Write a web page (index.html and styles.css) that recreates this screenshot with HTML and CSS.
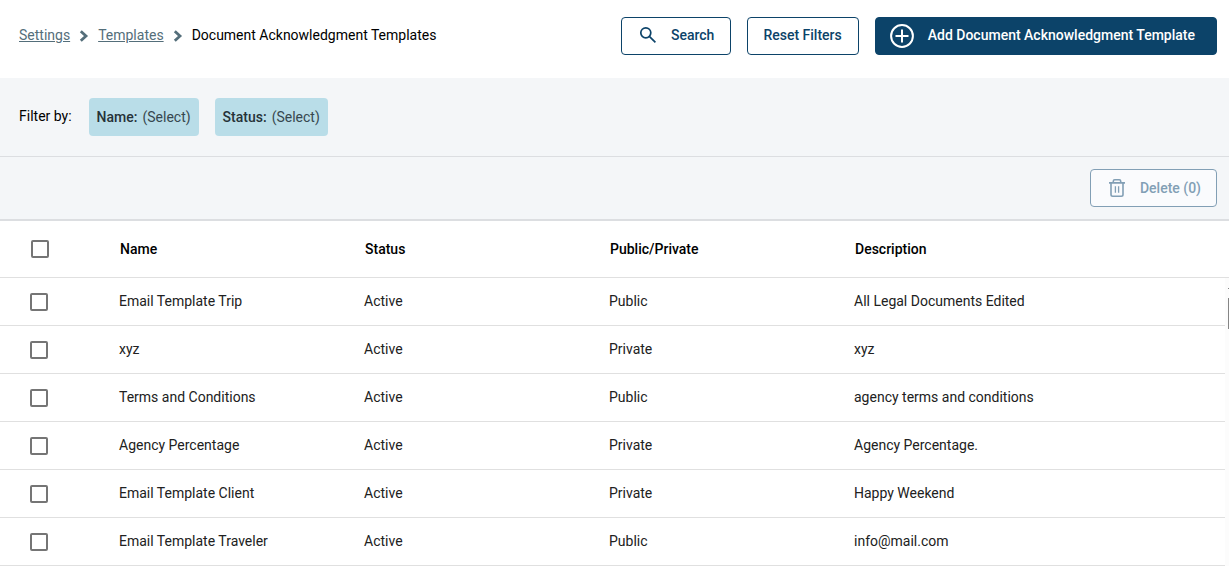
FILE: index.html
```html
<!DOCTYPE html>
<html lang="en">
<head>
<meta charset="utf-8">
<title>Document Acknowledgment Templates</title>
<link rel="stylesheet" href="styles.css">
</head>
<body>
<header class="topbar">
  <nav class="breadcrumb" aria-label="Breadcrumb">
    <a href="#">Settings</a>
    <svg class="chevron" viewBox="0 0 10 12" aria-hidden="true"><path d="M1.8 1.2 7 6 1.8 10.8"/></svg>
    <a href="#">Templates</a>
    <svg class="chevron" viewBox="0 0 10 12" aria-hidden="true"><path d="M1.8 1.2 7 6 1.8 10.8"/></svg>
    <span>Document Acknowledgment Templates</span>
  </nav>
  <div class="actions">
    <button type="button" class="btn btn-icon">
      <svg class="icon-search" viewBox="0 0 18 18" aria-hidden="true"><circle cx="6.8" cy="6.8" r="5"/><path d="M10.6 10.6 16.4 16.4"/></svg>
      <span>Search</span>
    </button>
    <button type="button" class="btn">Reset Filters</button>
    <button type="button" class="btn btn-primary">
      <svg class="icon-add" viewBox="0 0 24 24" aria-hidden="true"><circle cx="12" cy="12" r="10.9"/><path d="M12 5.5v13M5.5 12h13"/></svg>
      <span>Add Document Acknowledgment Template</span>
    </button>
  </div>
</header>
<main>
  <section class="filters">
    <span class="filters-label">Filter by:</span>
    <button type="button" class="chip"><strong>Name:</strong><span>(Select)</span></button>
    <button type="button" class="chip"><strong>Status:</strong><span>(Select)</span></button>
  </section>
  <section class="bulk">
    <button type="button" class="btn btn-icon btn-disabled" disabled>
      <svg class="icon-trash" viewBox="0 0 16 18" aria-hidden="true"><path d="M0 3.9h16M4.3 3.6V2.2Q4.3.8 5.7.8h4.6q1.4 0 1.4 1.4v1.4M2 4.5v11q0 1.7 1.7 1.7h8.6q1.7 0 1.7-1.7v-11"/><path class="thin" d="M6.4 7.3v6.4M9.6 7.3v6.4"/></svg>
      <span>Delete (0)</span>
    </button>
  </section>
  <section class="list">
    <table class="templates">
      <thead>
        <tr><th class="check"><input type="checkbox" aria-label="Select all"></th><th>Name</th><th>Status</th><th>Public/Private</th><th class="wide">Description</th></tr>
      </thead>
      <tbody>
        <tr><td class="check"><input type="checkbox" aria-label="Select Email Template Trip"></td><td>Email Template Trip</td><td>Active</td><td>Public</td><td>All Legal Documents Edited</td></tr>
        <tr><td class="check"><input type="checkbox" aria-label="Select xyz"></td><td>xyz</td><td>Active</td><td>Private</td><td>xyz</td></tr>
        <tr><td class="check"><input type="checkbox" aria-label="Select Terms and Conditions"></td><td>Terms and Conditions</td><td>Active</td><td>Public</td><td>agency terms and conditions</td></tr>
        <tr><td class="check"><input type="checkbox" aria-label="Select Agency Percentage"></td><td>Agency Percentage</td><td>Active</td><td>Private</td><td>Agency Percentage.</td></tr>
        <tr><td class="check"><input type="checkbox" aria-label="Select Email Template Client"></td><td>Email Template Client</td><td>Active</td><td>Private</td><td>Happy Weekend</td></tr>
        <tr><td class="check"><input type="checkbox" aria-label="Select Email Template Traveler"></td><td>Email Template Traveler</td><td>Active</td><td>Public</td><td>info@mail.com</td></tr>
      </tbody>
    </table>
    <div class="gutter" aria-hidden="true">
      <div class="gutter-head"></div>
      <div class="track"><div class="arrow"></div><div class="thumb"></div></div>
    </div>
  </section>
</main>
</body>
</html>
```

FILE: styles.css
```css
* { box-sizing: border-box; }

body {
  margin: 0;
  background: #fff;
  color: #000;
  font: 14px/20px Roboto, sans-serif;
  overflow: hidden;
}

.topbar {
  display: flex;
  justify-content: space-between;
  align-items: center;
  padding: 17px 12px 23px 19px;
}

.breadcrumb { display: flex; align-items: center; padding-bottom: 2px; }
.breadcrumb a { color: #546e7a; text-decoration: underline; }

.chevron {
  width: 10px;
  height: 12px;
  margin: 2px 9px 0;
  fill: none;
  stroke: #546e7a;
  stroke-width: 2.8;
}

.actions { display: flex; gap: 16px; }

.btn {
  display: flex;
  align-items: center;
  height: 38px;
  padding: 0 16px 2px 15px;
  border: 1px solid #0c4369;
  border-radius: 4px;
  background: #fff;
  color: #0c4369;
  font: 500 14px/20px Roboto, sans-serif;
  white-space: nowrap;
}

.btn svg { fill: none; stroke: currentColor; flex: none; }
.btn-icon { gap: 14px; padding-left: 17px; }
.btn-primary { gap: 14px; padding: 0 21px 2px 14px; background: #0c4369; color: #fff; }

.btn-disabled {
  gap: 15px;
  padding: 0 15px 0 18px;
  background: #fafbfd;
  border-color: #829fb5;
  color: #829fb5;
}

.icon-search { width: 18px; height: 18px; stroke-width: 1.7; }
.icon-add { width: 24px; height: 24px; margin-top: 2px; stroke-width: 2; }
.icon-trash { width: 16px; height: 18px; stroke-width: 1.6; }
.icon-trash .thin { stroke-width: 1.3; }

.filters {
  display: flex;
  align-items: center;
  gap: 16px;
  padding: 20px 19px;
  background: #f4f6f8;
  border-bottom: 1px solid #dcdee1;
}

.filters-label { padding: 0 1px 2px 0; }

.chip {
  display: flex;
  align-items: center;
  gap: 5px;
  height: 38px;
  padding: 0 8px;
  border: 0;
  border-radius: 4px;
  background: #b9dde8;
  color: #37474f;
  font: 14px/20px Roboto, sans-serif;
}

.chip strong { font-weight: 500; color: #263238; }

.bulk {
  display: flex;
  justify-content: flex-end;
  padding: 12px 12px 12px 19px;
  background: #f4f6f8;
  border-bottom: 2px solid #dcdee1;
}

.list { display: grid; grid-template-columns: 1fr 4px; }

.templates {
  width: 100%;
  table-layout: fixed;
  border-collapse: separate;
  border-spacing: 0;
}

.templates th,
.templates td {
  width: 20%;
  height: 48px;
  padding: 0 0 2px;
  border-bottom: 1px solid #e0e0e0;
  text-align: left;
  font-weight: 400;
  color: #212121;
}

.templates th { height: 57px; padding: 0 0 0 1px; font-weight: 500; color: #000; }
.templates th.wide { width: auto; }
.templates .check { width: 119px; padding: 0 0 0 30px; }
.templates th.check { padding-left: 31px; }

input[type="checkbox"] {
  appearance: none;
  display: block;
  width: 18px;
  height: 18px;
  margin: 0;
  border: 2px solid #757575;
  border-radius: 2px;
  background: #fff;
}

.gutter { display: flex; flex-direction: column; background: #fcfcfc; }
.gutter-head { height: 57px; background: #fff; border-bottom: 1px solid #e0e0e0; }
.track { display: flex; flex-direction: column; align-items: flex-end; gap: 9px; padding-top: 10px; }
.arrow { width: 1px; height: 1px; background: #858585; }
.thumb { width: 1px; height: 31px; background: #858585; }
```
